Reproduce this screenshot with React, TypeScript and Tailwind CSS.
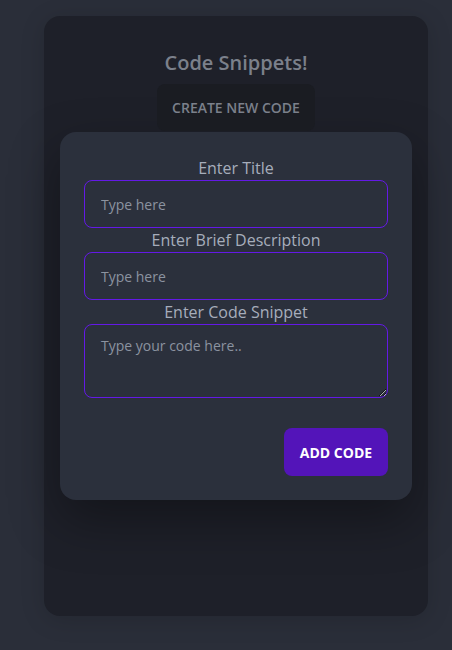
export default function App() {
  return (
    <div
      className="min-h-screen bg-[#2a2e39] pl-[44px] pr-[24px] pt-4 pb-[34px]"
      style={{ fontFamily: '"Open Sans", "Noto Sans", sans-serif' }}
    >
      {/* Main panel */}
      <div className="h-[600px] rounded-2xl bg-[#1e2029] shadow-[0_4px_24px_rgba(0,0,0,0.15)] px-4 pt-[34px]">
        <h1 className="text-center text-[20px] font-semibold text-[#7b808b] leading-[26px]">
          Code Snippets!
        </h1>
        <div className="flex justify-center mt-[8px]">
          <button className="w-[158px] h-[47px] rounded-lg bg-[#1a1c22] text-[14px] font-semibold text-[#7b808b]">
            CREATE NEW CODE
          </button>
        </div>

        {/* Modal */}
        <div className="mt-px rounded-2xl bg-[#2b303c] shadow-[0_20px_50px_rgba(0,0,0,0.35)] px-6 pt-[26px] pb-6">
          <label className="block text-center text-[16px] leading-[20px] text-[#a6adbb]">
            Enter Title
          </label>
          <input
            placeholder="Type here"
            className="mt-[2px] w-full h-[48px] rounded-lg border border-[#6419e6] bg-transparent px-4 text-[14px] text-[#a6adbb] placeholder:text-[#8b93a0] outline-none"
          />
          <label className="block text-center text-[16px] leading-[24px] text-[#a6adbb]">
            Enter Brief Description
          </label>
          <input
            placeholder="Type here"
            className="w-full h-[48px] rounded-lg border border-[#6419e6] bg-transparent px-4 text-[14px] text-[#a6adbb] placeholder:text-[#8b93a0] outline-none"
          />
          <label className="block text-center text-[16px] leading-[24px] text-[#a6adbb]">
            Enter Code Snippet
          </label>
          <textarea
            placeholder="Type your code here.."
            className="block w-full h-[74px] rounded-lg border border-[#6419e6] bg-transparent px-4 py-[10px] text-[14px] text-[#a6adbb] placeholder:text-[#8b93a0] outline-none"
          />
          <div className="flex justify-end mt-[30px]">
            <button className="w-[104px] h-[48px] rounded-lg bg-[#5314b9] text-[14px] font-bold text-white">
              ADD CODE
            </button>
          </div>
        </div>
      </div>
    </div>
  );
}
